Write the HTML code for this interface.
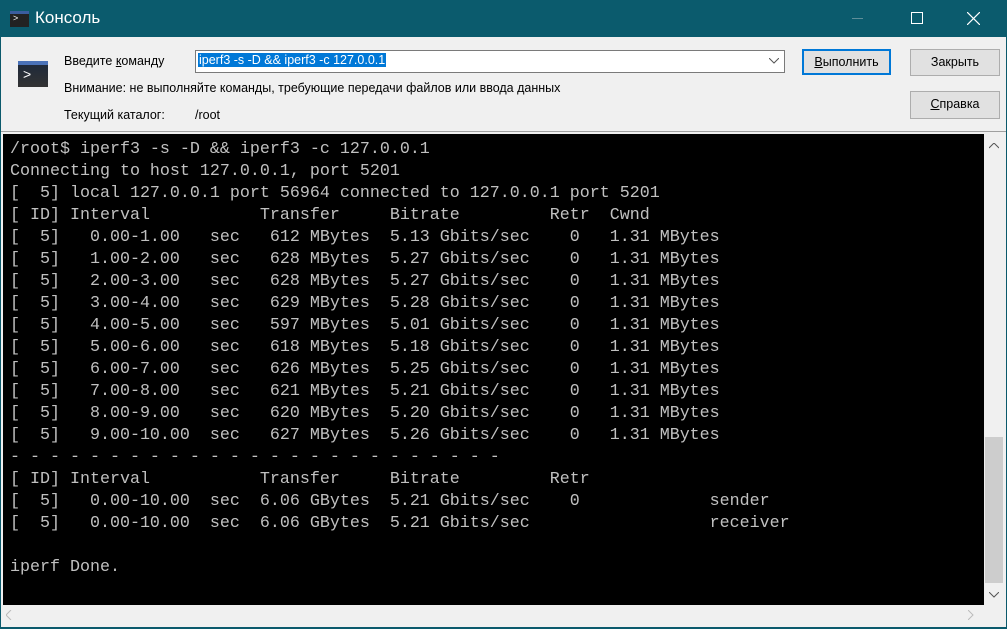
<!DOCTYPE html>
<html><head><meta charset="utf-8"><style>
*{margin:0;padding:0;box-sizing:border-box}
body{width:1007px;height:629px;overflow:hidden;background:#0b5a6c;font-family:"Liberation Sans",sans-serif;position:relative}
.title{position:absolute;left:0;top:0;width:1007px;height:37px;background:#0b5b6d;color:#fff;font-size:17px}
.panel{position:absolute;left:1px;top:37px;width:1005px;height:590px;background:#f0f0f0}
.t{position:absolute;font-size:12.5px;color:#000;white-space:nowrap}
.btn{position:absolute;background:#e1e1e1;border:1px solid #adadad;font-size:12.5px;text-align:center;line-height:24px}
.term{position:absolute;left:3px;top:134px;width:981px;height:471px;background:#000;color:#c0c0c0;font-family:"Liberation Mono",monospace;font-size:16.67px;line-height:22px;white-space:pre;padding:5px 0 0 7px}
</style></head><body>
<div class="title">
 <div style="position:absolute;left:10px;top:11px;width:19px;height:16px;background:linear-gradient(#3a5d9e 0 3px,#222 3px);color:#fff;font-size:9px;line-height:14px;padding-left:3px">&gt;</div>
 <div style="position:absolute;left:35px;top:8px">Консоль</div>
 <div style="position:absolute;left:852px;top:18px;width:11px;height:1px;background:#5f8e99"></div>
 <div style="position:absolute;left:911px;top:12px;width:12px;height:12px;border:1px solid #fff"></div>
 <svg style="position:absolute;left:967px;top:12px" width="13" height="13"><path d="M0 0L13 13M13 0L0 13" stroke="#fff" stroke-width="1.2"/></svg>
</div>
<div class="panel"></div>
<div style="position:absolute;left:18px;top:61px;width:30px;height:26px;background:linear-gradient(#4a72b8 0 4px,#1f2a3a 4px,#333);color:#fff;font-size:14px;padding:6px 0 0 5px;line-height:14px">&gt;</div>
<div class="t" style="left:64px;top:54px">Введите <u>к</u>оманду</div>
<div style="position:absolute;left:195px;top:50px;width:590px;height:23px;background:#fff;border:1px solid #7a7a7a"></div>
<div class="t" style="left:198px;top:53px;background:#0078d7;color:#fff;padding:0 1px">iperf3 -s -D &amp;&amp; iperf3 -c 127.0.0.1</div>
<svg style="position:absolute;left:769px;top:58px" width="10" height="6"><path d="M0 0L5 5L10 0" stroke="#555" fill="none"/></svg>
<div class="t" style="left:64px;top:81px">Внимание: не выполняйте команды, требующие передачи файлов или ввода данных</div>
<div class="t" style="left:64px;top:108px">Текущий каталог:</div>
<div class="t" style="left:195px;top:108px">/root</div>
<div class="btn" style="left:802px;top:49px;width:89px;height:26px;border:2px solid #0078d7;line-height:22px"><u>В</u>ыполнить</div>
<div class="btn" style="left:910px;top:49px;width:90px;height:27px">Закрыть</div>
<div class="btn" style="left:910px;top:91px;width:90px;height:28px"><u>С</u>правка</div>
<div style="position:absolute;left:1px;top:131px;width:1005px;height:1px;background:#a0a0a0"></div>
<div class="term">/root$ iperf3 -s -D &amp;&amp; iperf3 -c 127.0.0.1
Connecting to host 127.0.0.1, port 5201
[  5] local 127.0.0.1 port 56964 connected to 127.0.0.1 port 5201
[ ID] Interval           Transfer     Bitrate         Retr  Cwnd
[  5]   0.00-1.00   sec   612 MBytes  5.13 Gbits/sec    0   1.31 MBytes
[  5]   1.00-2.00   sec   628 MBytes  5.27 Gbits/sec    0   1.31 MBytes
[  5]   2.00-3.00   sec   628 MBytes  5.27 Gbits/sec    0   1.31 MBytes
[  5]   3.00-4.00   sec   629 MBytes  5.28 Gbits/sec    0   1.31 MBytes
[  5]   4.00-5.00   sec   597 MBytes  5.01 Gbits/sec    0   1.31 MBytes
[  5]   5.00-6.00   sec   618 MBytes  5.18 Gbits/sec    0   1.31 MBytes
[  5]   6.00-7.00   sec   626 MBytes  5.25 Gbits/sec    0   1.31 MBytes
[  5]   7.00-8.00   sec   621 MBytes  5.21 Gbits/sec    0   1.31 MBytes
[  5]   8.00-9.00   sec   620 MBytes  5.20 Gbits/sec    0   1.31 MBytes
[  5]   9.00-10.00  sec   627 MBytes  5.26 Gbits/sec    0   1.31 MBytes
- - - - - - - - - - - - - - - - - - - - - - - - -
[ ID] Interval           Transfer     Bitrate         Retr
[  5]   0.00-10.00  sec  6.06 GBytes  5.21 Gbits/sec    0             sender
[  5]   0.00-10.00  sec  6.06 GBytes  5.21 Gbits/sec                  receiver

iperf Done.</div>
<div style="position:absolute;left:984px;top:134px;width:20px;height:471px;background:#f0f0f0"></div>
<div style="position:absolute;left:985px;top:437px;width:18px;height:146px;background:#cdcdcd"></div>
<svg style="position:absolute;left:989px;top:143px" width="10" height="6"><path d="M0 5L5 0L10 5" stroke="#555" fill="none"/></svg>
<svg style="position:absolute;left:989px;top:592px" width="10" height="6"><path d="M0 0L5 5L10 0" stroke="#555" fill="none"/></svg>
<div style="position:absolute;left:3px;top:605px;width:981px;height:20px;background:#f0f0f0"></div>
<svg style="position:absolute;left:6px;top:610px" width="6" height="10"><path d="M5 0L0 5L5 10" stroke="#bbb" fill="none"/></svg>
<svg style="position:absolute;left:968px;top:610px" width="6" height="10"><path d="M0 0L5 5L0 10" stroke="#bbb" fill="none"/></svg>
</body></html>
